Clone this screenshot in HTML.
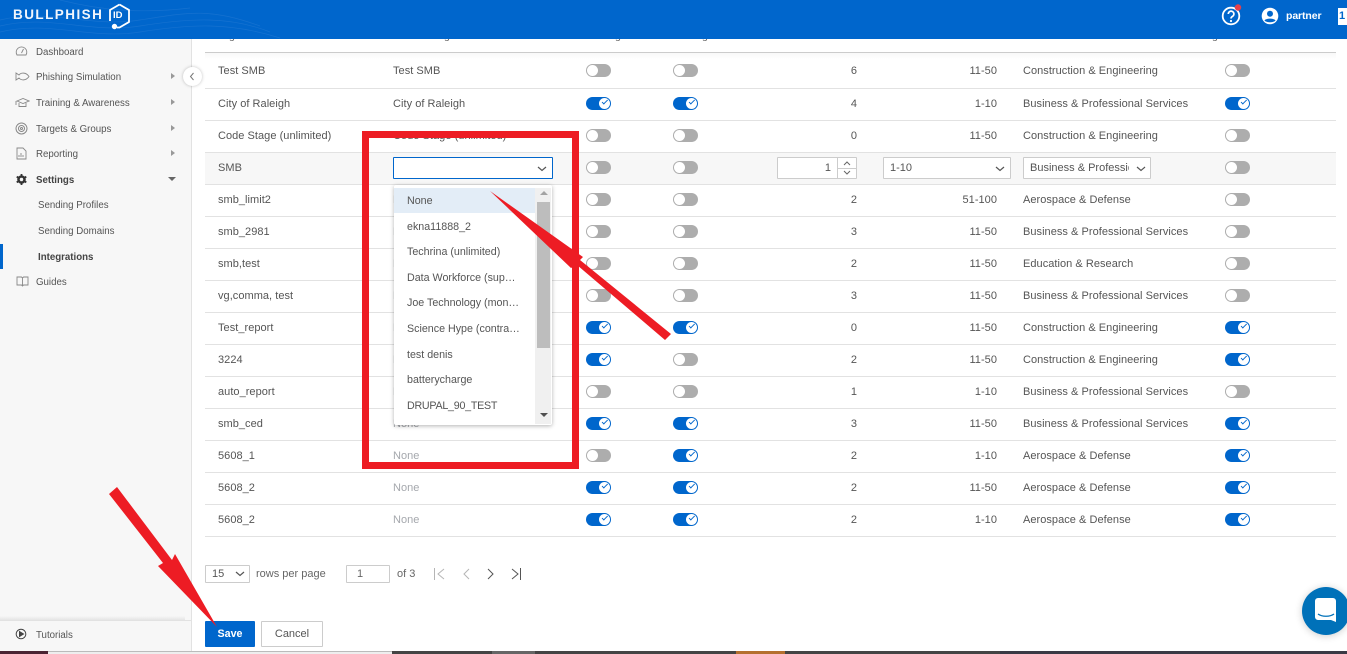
<!DOCTYPE html>
<html><head><meta charset="utf-8"><style>
html,body{margin:0;padding:0}
body{width:1347px;height:654px;overflow:hidden;position:relative;background:#fff;font-family:"Liberation Sans",sans-serif;font-size:10.5px;color:#555}
.a{position:absolute;white-space:nowrap}
#hd{position:absolute;left:0;top:0;width:1347px;height:39px;background:#0066cc;overflow:hidden;z-index:3}
#sb{position:absolute;left:0;top:39px;width:191px;height:612px;background:#f7f7f7;border-right:1px solid #e2e2e2}
.m{position:absolute;left:36px;font-size:9.7px;color:#555;line-height:12px;white-space:nowrap}
.tri{position:absolute;left:171px;width:0;height:0;border-left:4px solid #999;border-top:3.5px solid transparent;border-bottom:3.5px solid transparent}
.ic{position:absolute;left:15px}
.r{position:absolute;left:205px;width:1131px;height:31px;border-bottom:1px solid #e2e2e2}
.r span{position:absolute;top:50%;margin-top:-8px;line-height:14px;white-space:nowrap;color:#555;font-size:11px;letter-spacing:.04px}
.n{left:13px}.c{left:188px}.g{color:#a5a8ad!important}
.q{right:479px;text-align:right}.s{right:339px;text-align:right}.i{left:818px}
.r b{position:absolute;top:50%;margin-top:-7.5px;width:25px;height:13px;border-radius:7px;background:#adadad}
.r b::before{content:"";position:absolute;left:1px;top:1px;width:11px;height:11px;border-radius:50%;background:#fff}
.r b.o{background:#0066cc}
.r b.o::before{left:13px}
.r b.o::after{content:"";position:absolute;left:15.7px;top:3.2px;width:4.5px;height:2.2px;border-left:1.1px solid #0066cc;border-bottom:1.1px solid #0066cc;transform:rotate(-45deg)}
.x{left:381px}.y{left:468px}.z{left:1020px}
.r1 span{margin-top:-7px}.r1 b{margin-top:-6.5px}
.box{position:absolute;background:#fff;border:1px solid #ccc;box-sizing:border-box;border-radius:1px}
.it{position:absolute;left:13px;font-size:10.7px;color:#555;line-height:14px;white-space:nowrap}
</style></head><body>

<div class="a" style="left:229px;top:29px;font-size:10.5px;line-height:14px;color:#666">g</div>
<div class="a" style="left:444px;top:29px;font-size:10.5px;line-height:14px;color:#666">g</div>
<div class="a" style="left:615px;top:29px;font-size:10.5px;line-height:14px;color:#666">g</div>
<div class="a" style="left:702px;top:29px;font-size:10.5px;line-height:14px;color:#666">g</div>
<div class="a" style="left:1212px;top:29px;font-size:10.5px;line-height:14px;color:#666">g</div>
<div class="a" style="left:205px;top:52px;width:1131px;height:1px;background:#ccc"></div>
<div class="a" style="left:205px;top:53px;width:1131px;height:6px;background:linear-gradient(#f8f8f8,#fff)"></div>

<div class="r r1" style="top:53px;height:35px"><span class="n">Test SMB</span><span class="c">Test SMB</span><b class="x"></b><b class="y"></b><span class="q">6</span><span class="s">11-50</span><span class="i">Construction &amp; Engineering</span><b class="z"></b></div>
<div class="r" style="top:89px;height:31px"><span class="n">City of Raleigh</span><span class="c">City of Raleigh</span><b class="x o"></b><b class="y o"></b><span class="q">4</span><span class="s">1-10</span><span class="i">Business &amp; Professional Services</span><b class="z o"></b></div>
<div class="r" style="top:121px"><span class="n">Code Stage (unlimited)</span><span class="c">Code Stage (unlimited)</span><b class="x"></b><b class="y"></b><span class="q">0</span><span class="s">11-50</span><span class="i">Construction &amp; Engineering</span><b class="z"></b></div>
<div class="r" style="top:153px;background:#f7f7f7"><span class="n">SMB</span><b class="x"></b><b class="y"></b><b class="z"></b></div>
<div class="r" style="top:185px"><span class="n">smb_limit2</span><span class="c g">None</span><b class="x"></b><b class="y"></b><span class="q">2</span><span class="s">51-100</span><span class="i">Aerospace &amp; Defense</span><b class="z"></b></div>
<div class="r" style="top:217px"><span class="n">smb_2981</span><span class="c g">None</span><b class="x"></b><b class="y"></b><span class="q">3</span><span class="s">11-50</span><span class="i">Business &amp; Professional Services</span><b class="z"></b></div>
<div class="r" style="top:249px"><span class="n">smb,test</span><span class="c g">None</span><b class="x"></b><b class="y"></b><span class="q">2</span><span class="s">11-50</span><span class="i">Education &amp; Research</span><b class="z"></b></div>
<div class="r" style="top:281px"><span class="n">vg,comma, test</span><span class="c g">None</span><b class="x"></b><b class="y"></b><span class="q">3</span><span class="s">11-50</span><span class="i">Business &amp; Professional Services</span><b class="z"></b></div>
<div class="r" style="top:313px"><span class="n">Test_report</span><span class="c g">None</span><b class="x o"></b><b class="y o"></b><span class="q">0</span><span class="s">11-50</span><span class="i">Construction &amp; Engineering</span><b class="z o"></b></div>
<div class="r" style="top:345px"><span class="n">3224</span><span class="c g">None</span><b class="x o"></b><b class="y"></b><span class="q">2</span><span class="s">11-50</span><span class="i">Construction &amp; Engineering</span><b class="z o"></b></div>
<div class="r" style="top:377px"><span class="n">auto_report</span><span class="c g">None</span><b class="x"></b><b class="y"></b><span class="q">1</span><span class="s">1-10</span><span class="i">Business &amp; Professional Services</span><b class="z"></b></div>
<div class="r" style="top:409px"><span class="n">smb_ced</span><span class="c g">None</span><b class="x o"></b><b class="y o"></b><span class="q">3</span><span class="s">11-50</span><span class="i">Business &amp; Professional Services</span><b class="z o"></b></div>
<div class="r" style="top:441px"><span class="n">5608_1</span><span class="c g">None</span><b class="x"></b><b class="y o"></b><span class="q">2</span><span class="s">1-10</span><span class="i">Aerospace &amp; Defense</span><b class="z o"></b></div>
<div class="r" style="top:473px"><span class="n">5608_2</span><span class="c g">None</span><b class="x o"></b><b class="y o"></b><span class="q">2</span><span class="s">11-50</span><span class="i">Aerospace &amp; Defense</span><b class="z o"></b></div>
<div class="r" style="top:505px"><span class="n">5608_2</span><span class="c g">None</span><b class="x o"></b><b class="y o"></b><span class="q">2</span><span class="s">1-10</span><span class="i">Aerospace &amp; Defense</span><b class="z o"></b></div>

<!-- edit row controls -->
<div class="box" style="left:393px;top:157px;width:160px;height:22px;border-color:#0066cc"></div>
<svg class="a" style="left:537px;top:166px" width="10" height="6"><path d="M1 1l4 3.500L9 1" fill="none" stroke="#555" stroke-width="1.200"/></svg>
<div class="box" style="left:777px;top:157px;width:80px;height:22px"></div>
<div class="a" style="left:837px;top:158px;width:1px;height:20px;background:#ccc"></div>
<div class="a" style="left:838px;top:168px;width:18px;height:1px;background:#ccc"></div>
<div class="a" style="left:777px;top:160px;width:54px;text-align:right;font-size:11px;line-height:16px;color:#555">1</div>
<svg class="a" style="left:842px;top:160px" width="10" height="16"><path d="M2 5l3-3 3 3M2 11l3 3 3-3" fill="none" stroke="#666" stroke-width="1"/></svg>
<div class="box" style="left:883px;top:157px;width:128px;height:22px"></div>
<div class="a" style="left:890px;top:161px;font-size:11px;line-height:14px;color:#555">1-10</div>
<svg class="a" style="left:995px;top:166px" width="10" height="6"><path d="M1 1l4 3.500L9 1" fill="none" stroke="#555" stroke-width="1.200"/></svg>
<div class="box" style="left:1023px;top:157px;width:128px;height:22px"></div>
<div class="a" style="left:1030px;top:161px;width:99px;overflow:hidden;font-size:11px;line-height:14px;color:#555">Business &amp; Professional</div>
<svg class="a" style="left:1136px;top:166px" width="10" height="6"><path d="M1 1l4 3.500L9 1" fill="none" stroke="#555" stroke-width="1.200"/></svg>

<!-- dropdown -->
<div class="a" style="left:394px;top:185px;width:158px;height:240px;background:#fff;box-shadow:0 1px 4px rgba(0,0,0,.3);border-radius:2px;z-index:2">
<div class="a" style="left:0;top:3px;width:141px;height:25px;background:#e3edf7"></div>
<div class="it" style="top:9px">None</div>
<div class="it" style="top:35px">ekna11888_2</div>
<div class="it" style="top:60px">Techrina (unlimited)</div>
<div class="it" style="top:86px">Data Workforce (sup…</div>
<div class="it" style="top:111px">Joe Technology (mon…</div>
<div class="it" style="top:137px">Science Hype (contra…</div>
<div class="it" style="top:163px">test denis</div>
<div class="it" style="top:188px">batterycharge</div>
<div class="it" style="top:214px;letter-spacing:-.25px">DRUPAL_90_TEST</div>
<div class="a" style="left:141px;top:3px;width:16px;height:236px;background:#f0f0f0"></div>
<div class="a" style="left:143px;top:17px;width:13px;height:146px;background:#bdbdbd"></div>
<div class="a" style="left:146px;top:6px;width:0;height:0;border-left:4px solid transparent;border-right:4px solid transparent;border-bottom:4px solid #a3a3a3"></div>
<div class="a" style="left:146px;top:228px;width:0;height:0;border-left:4px solid transparent;border-right:4px solid transparent;border-top:4px solid #505050"></div>
</div>

<!-- pagination -->
<div class="box" style="left:205px;top:565px;width:45px;height:18px"></div>
<div class="a" style="left:212px;top:567px;font-size:11px;line-height:15px;color:#555">15</div>
<svg class="a" style="left:235px;top:571px" width="10" height="6"><path d="M1 1l4 3.500L9 1" fill="none" stroke="#555" stroke-width="1.200"/></svg>
<div class="a" style="left:256px;top:567px;font-size:11px;line-height:15px;color:#666">rows per page</div>
<div class="box" style="left:346px;top:565px;width:44px;height:18px"></div>
<div class="a" style="left:357px;top:567px;font-size:11px;line-height:15px;color:#666">1</div>
<div class="a" style="left:397px;top:567px;font-size:11px;line-height:15px;color:#666">of 3</div>
<svg class="a" style="left:430px;top:565px" width="96" height="18" fill="none" stroke-width="1">
<path d="M4.500 3v12M14 4l-6 5 6 5" stroke="#b5b5b5"/><path d="M39 4l-5 5 5 5" stroke="#b5b5b5"/><path d="M58 4l5 5-5 5" stroke="#555"/><path d="M82 4l6 5-6 5M90.500 3v12" stroke="#555"/>
</svg>

<!-- save -->
<div class="a" style="left:205px;top:621px;width:50px;height:26px;background:#0066cc;border-radius:1px;color:#fff;font-weight:bold;font-size:10.700px;line-height:26px;text-align:center">Save</div>
<div class="box" style="left:261px;top:621px;width:62px;height:26px;color:#555;font-size:11px;line-height:24px;text-align:center">Cancel</div>

<!-- sidebar -->
<div id="sb">
<svg class="ic" style="top:6px" width="13" height="12" fill="none" stroke="#888" stroke-width=".9"><path d="M2 10a5.300 5.300 0 1 1 9 0zM6.500 8l2-4"/></svg>
<div class="m" style="top:6px;transform:translateY(0)">Dashboard</div>
<svg class="ic" style="top:32px" width="15" height="11" fill="none" stroke="#888" stroke-width=".9"><path d="M1 2v7l3-2c2 2.500 7 3 10-1.500C11 1 6 1.500 4 4z"/></svg>
<div class="m" style="top:31px">Phishing Simulation</div><div class="tri" style="top:34px"></div>
<svg class="ic" style="top:58px" width="15" height="11" fill="none" stroke="#888" stroke-width=".9"><path d="M2 4l6-2.500L14 4 8 6.500zM4 6v3.500h7V6M1 4v4"/></svg>
<div class="m" style="top:57px">Training &amp; Awareness</div><div class="tri" style="top:60px"></div>
<svg class="ic" style="top:83px" width="13" height="13" fill="none" stroke="#888"><circle cx="6.500" cy="6.500" r="5.500"/><circle cx="6.500" cy="6.500" r="3"/><circle cx="6.500" cy="6.500" r="1"/></svg>
<div class="m" style="top:83px">Targets &amp; Groups</div><div class="tri" style="top:86px"></div>
<svg class="ic" style="top:108px;left:16px" width="11" height="13" fill="none" stroke="#888" stroke-width=".9"><path d="M1 1h6l3 3v8H1zM3 10V8M5 10V6M7 10V8"/></svg>
<div class="m" style="top:108px">Reporting</div><div class="tri" style="top:111px"></div>
<svg class="ic" style="top:134px;left:15px" width="13" height="13"><circle cx="6.500" cy="6.500" r="3.200" fill="none" stroke="#333" stroke-width="2.200"/><path d="M6.500 1v11M1.700 3.700l9.600 5.600M1.700 9.300l9.600-5.600" stroke="#333" stroke-width="1.800"/><circle cx="6.500" cy="6.500" r="1.700" fill="#f7f7f7"/></svg>
<div class="m" style="top:134px;font-weight:bold;color:#444">Settings</div>
<div class="a" style="left:168px;top:138px;width:0;height:0;border-top:4px solid #666;border-left:4px solid transparent;border-right:4px solid transparent"></div>
<div class="m" style="top:159px;left:38px">Sending Profiles</div>
<div class="m" style="top:185px;left:38px">Sending Domains</div>
<div class="m" style="top:211px;left:38px;font-weight:bold;color:#444">Integrations</div>
<div class="a" style="left:0;top:205px;width:3px;height:25px;background:#0066cc"></div>
<svg class="ic" style="top:237px;left:16px" width="13" height="11" fill="none" stroke="#888" stroke-width=".9"><path d="M1 1h4.500l1 1 1-1H12v8H7.500l-1 1-1-1H1zM6.500 2v8"/></svg>
<div class="m" style="top:236px">Guides</div>
<div class="a" style="left:0;top:577px;width:185px;height:5px;background:linear-gradient(#fff0,#e0e0e0)"></div>
<div class="a" style="left:0;top:581px;width:191px;height:1px;background:#e2e2e2"></div>
<svg class="ic" style="top:589px" width="12" height="12" fill="none" stroke="#444" stroke-width="1"><circle cx="6" cy="6" r="4.800"/><path d="M4.500 3.500l4 2.500-4 2.500z" fill="#444"/></svg>
<div class="m" style="top:589px">Tutorials</div>
</div>
<style>#sb .m{margin-top:2px}</style>
<div class="a" style="left:183px;top:67px;width:19px;height:19px;border-radius:50%;background:#fff;box-shadow:0 0 3px rgba(0,0,0,.25)"></div>
<svg class="a" style="left:189px;top:72px" width="6" height="9"><path d="M4.500 1L1.500 4.500l3 3.500" fill="none" stroke="#777" stroke-width="1"/></svg>

<!-- header -->
<div id="hd">
<svg class="a" style="left:0;top:0" width="300" height="39" fill="none" stroke="#2f80d6" stroke-width=".7" opacity=".45">
<path d="M0 26c50-12 90 8 140 0s90-10 130 6M0 32c50-12 90 8 140 0s90-10 140 6M0 20c50-12 90 8 140 0s70-12 120 6M60 0c40 10 80 14 130 8"/>
</svg>
<div class="a" style="left:13px;top:6px;font-size:13.500px;line-height:18px;font-weight:bold;color:#f2f6fc;letter-spacing:1.450px">BULLPHISH</div>
<svg class="a" style="left:107px;top:3px" width="25" height="27" fill="none" stroke="#fff" stroke-width="1.800"><path d="M12.500 1.500l9.500 5.500v12l-9.500 5.500H10M3 18V7l9.500-5.500"/><circle cx="7.500" cy="23.500" r="1.800" fill="#fff"/></svg>
<div class="a" style="left:113px;top:10px;font-size:9.500px;line-height:12px;font-weight:bold;color:#fff">ID</div>
<svg class="a" style="left:1221px;top:3px" width="22" height="24"><circle cx="10" cy="13" r="8.300" fill="none" stroke="#fff" stroke-width="1.800"/><path d="M7.300 11a2.800 2.800 0 1 1 4.300 2.300c-1 .7-1.600 1.100-1.600 2.200" fill="none" stroke="#fff" stroke-width="1.700"/><circle cx="10" cy="18" r="1.100" fill="#fff"/><circle cx="17" cy="4.500" r="3.200" fill="#e2404c"/></svg>
<svg class="a" style="left:1261px;top:7px" width="18" height="18"><circle cx="9" cy="9" r="8.300" fill="#fff"/><circle cx="9" cy="6.800" r="3" fill="#0066cc"/><path d="M3.500 13.500c1.500-2.500 9.500-2.500 11 0C13 15.800 5 15.800 3.500 13.500z" fill="#0066cc"/></svg>
<div class="a" style="left:1286px;top:9px;font-size:10.500px;line-height:14px;color:#fff;font-weight:bold;letter-spacing:-.1px">partner</div>
<div class="a" style="left:1338px;top:8px;width:9px;height:17px;background:#fff;color:#0066cc;font-weight:bold;font-size:11px;line-height:17px;text-indent:1px;overflow:hidden">1</div>
</div>

<!-- bottom strip -->
<div class="a" style="left:0;top:651px;width:1347px;height:3px;background:#444;z-index:4">
<div class="a" style="left:0;top:0;width:48px;height:3px;background:#4a2433"></div>
<div class="a" style="left:48px;top:0;width:344px;height:3px;background:#eee;border-top:1px solid #bbb;box-sizing:border-box"></div>
<div class="a" style="left:492px;top:0;width:43px;height:3px;background:#666"></div>
<div class="a" style="left:736px;top:0;width:49px;height:3px;background:#b5702f"></div>
<div class="a" style="left:1000px;top:0;width:347px;height:3px;background:#3a3a45"></div>
</div>

<!-- chat -->
<div class="a" style="left:1302px;top:587px;width:48px;height:48px;border-radius:50%;background:#0071b9;box-shadow:0 1px 8px rgba(0,0,0,.2);z-index:4"></div>
<svg class="a" style="left:1314px;top:597px;z-index:5" width="26" height="28"><path d="M4 1h15a3 3 0 0 1 3 3v21l-5-2H4a3 3 0 0 1-3-3V4a3 3 0 0 1 3-3z" fill="#fff"/><path d="M4 17c4 3 12 3 16 0" fill="none" stroke="#0071b9" stroke-width="1.300"/></svg>

<!-- annotations -->
<div class="a" style="left:362px;top:131px;width:217px;height:338px;border:7px solid #ed1c24;box-sizing:border-box;z-index:6"></div>
<svg class="a" style="left:0;top:0;z-index:7" width="1347" height="654">
<polygon fill="#ed1c24" points="490,191 583,257 580,260 671,334 665,340 577,265 571,268"/>
<polygon fill="#ed1c24" points="117,487 172,560 175,554 217,627 158,566 163,563 109,494"/>
</svg>
</body></html>
